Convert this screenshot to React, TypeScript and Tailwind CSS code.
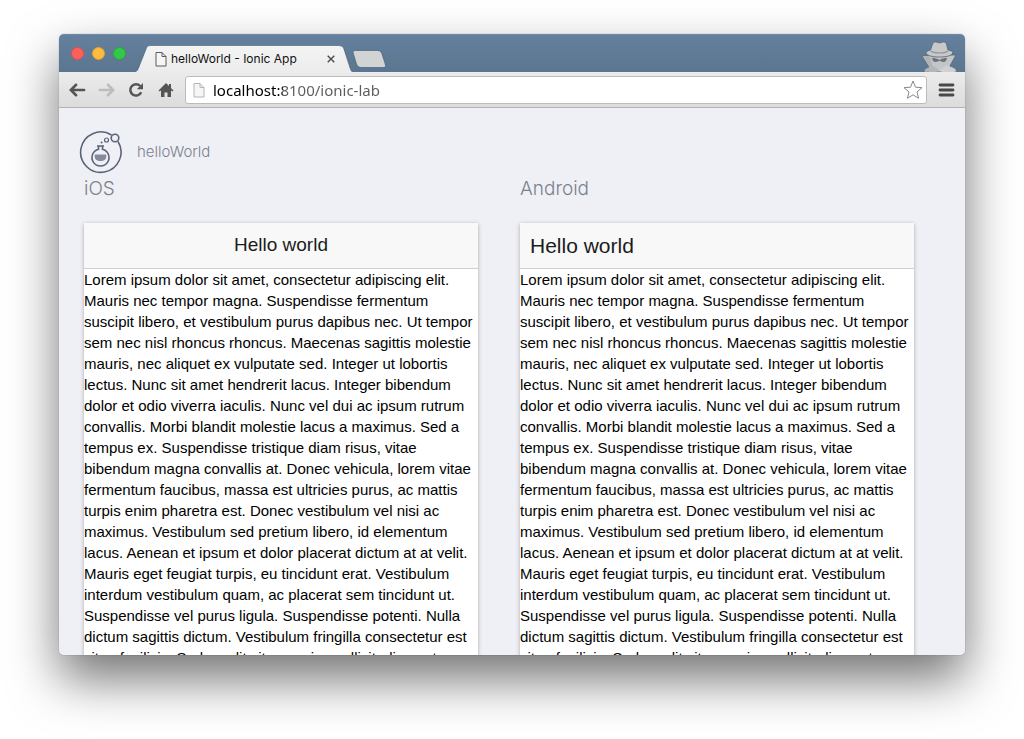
import React from "react";

const lines: string[] = [
  "Lorem ipsum dolor sit amet, consectetur adipiscing elit.",
  "Mauris nec tempor magna. Suspendisse fermentum",
  "suscipit libero, et vestibulum purus dapibus nec. Ut tempor",
  "sem nec nisl rhoncus rhoncus. Maecenas sagittis molestie",
  "mauris, nec aliquet ex vulputate sed. Integer ut lobortis",
  "lectus. Nunc sit amet hendrerit lacus. Integer bibendum",
  "dolor et odio viverra iaculis. Nunc vel dui ac ipsum rutrum",
  "convallis. Morbi blandit molestie lacus a maximus. Sed a",
  "tempus ex. Suspendisse tristique diam risus, vitae",
  "bibendum magna convallis at. Donec vehicula, lorem vitae",
  "fermentum faucibus, massa est ultricies purus, ac mattis",
  "turpis enim pharetra est. Donec vestibulum vel nisi ac",
  "maximus. Vestibulum sed pretium libero, id elementum",
  "lacus. Aenean et ipsum et dolor placerat dictum at at velit.",
  "Mauris eget feugiat turpis, eu tincidunt erat. Vestibulum",
  "interdum vestibulum quam, ac placerat sem tincidunt ut.",
  "Suspendisse vel purus ligula. Suspendisse potenti. Nulla",
  "dictum sagittis dictum. Vestibulum fringilla consectetur est",
  "vitae facilisis. Sed ac elit vitae sapien sollicitudin auctor",
];

function PageIcon({ className, stroke }: { className: string; stroke: string }) {
  return (
    <svg className={className} viewBox="0 0 12 16" fill="none" stroke={stroke} aria-hidden="true">
      <path d="M1 1.500h6l4 4v9.500H1z" fill="#f6f6f6" />
      <path d="M7 1.500v4h4" />
    </svg>
  );
}

function TabShape() {
  return (
    <svg
      className="absolute inset-0 h-full w-full"
      viewBox="0 0 218 26"
      preserveAspectRatio="none"
      aria-hidden="true"
    >
      <defs>
        <linearGradient id="tabFill" x1="0" y1="0" x2="0" y2="1">
          <stop offset="0" stopColor="#f4f4f4" />
          <stop offset="1" stopColor="#ececec" />
        </linearGradient>
      </defs>
      <path
        d="M0 26C2 25 3 24 4 21L11 4C12 1 13 .5 16 .5H203C206 .5 208 1 209 4L215 22C216 25 217 26 218 26Z"
        fill="url(#tabFill)"
      />
      <path
        d="M0 26C2 25 3 24 4 21L11 4C12 1 13 .5 16 .5H203C206 .5 208 1 209 4L215 22C216 25 217 26 218 26"
        fill="none"
        stroke="#40576f"
        strokeOpacity=".55"
      />
    </svg>
  );
}

function Incognito() {
  return (
    <svg className="h-[31px] w-[38px]" viewBox="0 0 38 31" aria-hidden="true">
      <g stroke="#50657a" strokeWidth=".8" strokeLinejoin="round">
        <path d="M3 31C3 28 5 27 8 26L6 23L1 15L9 14H29L35 14L30 23L29 25C33 26 36 28 36 31Z" fill="#c3c5c7" />
        <path d="M5 12.500C5 10.500 7 9.500 9.500 9L11.500 3C12 1 14 .6 16 1.200C18 2 19 2 21 1.200C23 .6 25 1 25.500 3L27 9C30 9.500 32 10.500 32 12C30 15 25 16 18.500 16C12 16 7 15 5 12.500Z" fill="#c6c8ca" />
      </g>
      <path d="M10 9.500C14 12 23 12 27 9.500L27.300 10.700C23 13.200 14 13.200 9.600 10.700Z" fill="#8e9295" />
      <path d="M2 15.500L9 15L11 24L8 30.500H3.500C4 28.500 6 27.500 9 26L7 23Z" fill="#b0b3b6" />
      <path d="M11 17C14 17 16 17.500 18.500 19C21 17.500 23 17 26 17C25.500 19.500 24.500 21 22.500 21C20.500 21 19.500 20 18.500 19.800C17.500 20 16.500 21 14.500 21C12.500 21 11.500 19.500 11 17Z" fill="#6d7377" />
      <path d="M11 24L18 29L15 31H8Z" fill="#b4b7ba" />
      <path d="M27 24L18 29L21 31H34C33 28.500 31 27 28 26Z" fill="#cfd1d3" />
    </svg>
  );
}

function LabLogo() {
  return (
    <svg className="h-11 w-11 shrink-0" viewBox="0 0 44 44" fill="none" stroke="#5c6478" strokeWidth="1.6" aria-hidden="true">
      <path d="M32.500 5A20.200 20.200 0 1 0 39 11.500" />
      <circle cx="36" cy="8" r="3.800" />
      <circle cx="27.500" cy="10" r="2" strokeWidth="1.200" />
      <circle cx="22.600" cy="12.600" r="1" fill="#5c6478" stroke="none" />
      <path d="M18 16h7M19.500 16v3.300a8.500 8.500 0 1 0 4 0V16" />
      <path d="M16 24.500h11c1.200 4-1 6.500-5.500 6.500s-6.700-2.500-5.500-6.500z" fill="#858b9b" stroke="none" />
    </svg>
  );
}

function Device({ name, android }: { name: string; android?: boolean }) {
  return (
    <section className="min-w-0 flex-1">
      <h2 className="font-['Inter',sans-serif] text-[19px] font-light leading-7 text-[#7b808e]">{name}</h2>
      <article className="mt-5 bg-white shadow-[0_1px_4px_rgba(0,0,0,0.3)]">
        <header
          className={
            android
              ? "flex h-[46px] items-center border-b border-[#cfcfcf] bg-[#f8f8f8] px-[10px] text-[21px] text-[#1c1c1c]"
              : "flex h-[46px] items-center justify-center border-b border-[#cfcfcf] bg-[#f8f8f8] text-[19px] text-[#1c1c1c]"
          }
        >
          <h3>Hello world</h3>
        </header>
        <p className="text-[15px] leading-[21px] text-black">
          {lines.map((line) => (
            <span key={line} className="block whitespace-nowrap">
              {line}
            </span>
          ))}
        </p>
      </article>
    </section>
  );
}

export default function App() {
  return (
    <div className="h-screen overflow-hidden bg-white px-[59px] pt-[34px] pb-[84px] font-['Liberation_Sans',Arial,sans-serif]">
      <div className="flex h-full flex-col rounded-[5px] shadow-[0_0_1px_rgba(0,0,0,0.5),0_24px_50px_rgba(0,0,0,0.55)]">
        <div className="flex min-h-0 flex-1 flex-col overflow-hidden rounded-[5px]">
          <div className="flex h-[38px] shrink-0 items-end border-t border-[#6d8aa8] bg-linear-to-b from-[#64809d] to-[#5b7690]">
            <div className="flex gap-2 self-center pl-3">
              <button aria-label="Close window" className="h-[13px] w-[13px] rounded-full border border-[#e2504a] bg-[#fc605c]" />
              <button aria-label="Minimize window" className="h-[13px] w-[13px] rounded-full border border-[#e0a030] bg-[#fdbc40]" />
              <button aria-label="Zoom window" className="h-[13px] w-[13px] rounded-full border border-[#27aa38] bg-[#34c84a]" />
            </div>
            <div className="relative ml-[9px] h-[27px] w-[218px] shrink-0">
              <TabShape />
              <div className="relative flex h-full items-center pl-5 pr-[14px]">
                <PageIcon className="h-4 w-3" stroke="#5a5a5a" />
                <span className="ml-1 flex-1 whitespace-nowrap font-['Inter',sans-serif] text-xs text-[#111]">
                  helloWorld - Ionic App
                </span>
                <button aria-label="Close tab" className="flex h-4 w-4 items-center justify-center">
                  <svg className="h-2 w-2" viewBox="0 0 8 8" stroke="#4c4c4c" strokeWidth="1.4" aria-hidden="true">
                    <path d="M.7.7l6.600 6.600M7.300.7L.7 7.300" />
                  </svg>
                </button>
              </div>
            </div>
            <button aria-label="New tab" className="mb-1 -ml-px h-[18px] w-[34px]">
              <svg className="h-full w-full" viewBox="0 0 34 17" preserveAspectRatio="none" aria-hidden="true">
                <path d="M3 .5H26c2 0 3 .8 3.800 2.500l3.500 10.500c.6 2 0 3-2 3H9c-2.500 0-3.600-.8-4.300-2.500L1.200 3C.6 1.500 1 .5 3 .5z" fill="#d2d3d4" stroke="#4b6278" strokeOpacity=".7" />
              </svg>
            </button>
            <div className="ml-auto mr-[6px]">
              <Incognito />
            </div>
          </div>

          <div className="flex h-9 shrink-0 items-center border-b border-[#b4b4b4] bg-linear-to-b from-[#ececec] to-[#dcdcdc] pr-[10px] pl-[10px]">
            <button aria-label="Back" className="h-4 w-[17px]">
              <svg className="h-full w-full" viewBox="0 0 18 16" fill="none" stroke="#555" strokeWidth="2.800" strokeLinecap="round" aria-hidden="true">
                <path d="M7.500 2.500L2 8l5.500 5.500M2.500 8H16" />
              </svg>
            </button>
            <button aria-label="Forward" className="ml-3 h-4 w-[17px]">
              <svg className="h-full w-full" viewBox="0 0 18 16" fill="none" stroke="#bdbdbd" strokeWidth="2.800" strokeLinecap="round" aria-hidden="true">
                <path d="M10.500 2.500L16 8l-5.500 5.500M15.500 8H2" />
              </svg>
            </button>
            <button aria-label="Reload" className="ml-[13px] h-4 w-4">
              <svg className="h-full w-full" viewBox="0 0 16 16" fill="none" stroke="#555" strokeWidth="2.500" aria-hidden="true">
                <path d="M12.200 4A5.700 5.700 0 1 0 13.200 10.300" />
                <path d="M15 1v6.200H8.800z" fill="#555" stroke="none" />
              </svg>
            </button>
            <button aria-label="Home" className="ml-[14px] h-4 w-4">
              <svg className="h-full w-full" viewBox="0 0 16 16" aria-hidden="true">
                <path d="M8 1l3 3V2h2v4l2.500 2.500-1 1L13 8.500V15H9.500v-4.500h-3V15H3V8.500l-1.500 1-1-1z" fill="#555" />
              </svg>
            </button>
            <div className="ml-[11px] flex h-7 min-w-0 flex-1 items-center rounded-[3px] border border-[#bcbcbc] bg-white px-[6px]">
              <PageIcon className="h-4 w-[14px] shrink-0" stroke="#b5b5b5" />
              <input
                type="text"
                aria-label="Address"
                defaultValue="localhost:8100/ionic-lab"
                className="ml-[7px] h-6 min-w-0 flex-1 bg-linear-to-r from-black from-[69px] to-[#5c5c5c] to-[70px] bg-clip-text font-['Noto_Sans',sans-serif] text-[15px] leading-6 text-transparent caret-black outline-none"
              />
              <button aria-label="Bookmark this page" className="-mr-[3px] h-5 w-5">
                <svg className="h-full w-full" viewBox="0 0 20 20" fill="#fff" stroke="#888" strokeLinejoin="round" aria-hidden="true">
                  <path d="M10 1l2.500 6.200 6.500.5-5 4.200 1.600 6.400L10 14.800l-5.600 3.500L6 11.900 1 7.700l6.500-.5z" />
                </svg>
              </button>
            </div>
            <button aria-label="Menu" className="ml-[11px] h-4 w-[17px]">
              <svg className="h-full w-full" viewBox="0 0 17 16" stroke="#484848" strokeWidth="2.800" strokeLinecap="round" aria-hidden="true">
                <path d="M2 3h13M2 8h13M2 13h13" />
              </svg>
            </button>
          </div>

          <main className="min-h-0 flex-1 overflow-hidden bg-[#eff0f5] pt-[22px]">
            <div className="flex items-center pl-5">
              <LabLogo />
              <h1 className="ml-[14px] font-['Inter',sans-serif] text-[15px] font-light text-[#7b808e]">helloWorld</h1>
            </div>
            <div className="flex gap-[42px] pt-px pr-[51px] pl-[25px]">
              <Device name="iOS" />
              <Device name="Android" android />
            </div>
          </main>
        </div>
      </div>
    </div>
  );
}
